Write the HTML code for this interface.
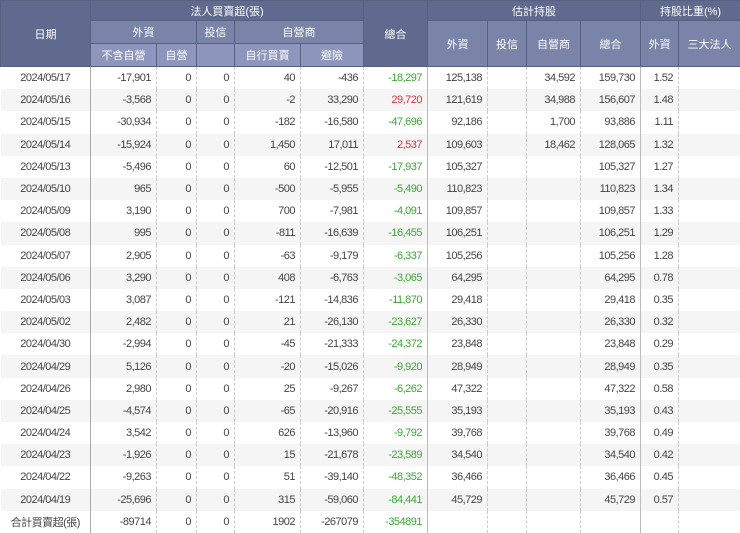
<!DOCTYPE html>
<html><head><meta charset="utf-8"><style>
body{margin:0;width:740px;height:528px;overflow:hidden;background:#fff;font-family:"Liberation Sans","Noto Sans CJK TC",sans-serif;font-size:11px;color:#444}
table{border-collapse:collapse;table-layout:fixed;width:740px}
th{color:#fff;font-weight:normal;text-align:center;padding:0;border:1px solid #56607f;font-size:11px}
th.a{background:#5f6a8e;height:19px}
th.b{background:#7a84a9;height:22px}
th.c{background:#8e96bd;height:22px}
td{height:22.2px;padding:0 5px 0 0;text-align:right;white-space:nowrap;border-left:1px dashed #ccc;letter-spacing:-0.5px}
td:first-child{text-align:center;padding:0;border-left:none;border-right:1px solid #aaa}
tr:nth-child(even) td{background:#f5f5f5}
.g{color:#3aa833}.r{color:#e0333a}
td.s{border-left:1px solid #bbb}
</style></head><body>
<table>
<colgroup><col style="width:90px"><col style="width:66px"><col style="width:40px"><col style="width:38px"><col style="width:66px"><col style="width:63px"><col style="width:64px"><col style="width:60px"><col style="width:39px"><col style="width:54px"><col style="width:60px"><col style="width:38px"><col style="width:62px"></colgroup>
<thead>
<tr><th class="a" rowspan="3">日期</th><th class="a" colspan="5">法人買賣超(張)</th><th class="a" rowspan="3">總合</th><th class="a" colspan="4">估計持股</th><th class="a" colspan="2">持股比重(%)</th></tr>
<tr><th class="b" colspan="2">外資</th><th class="b">投信</th><th class="b" colspan="2">自營商</th><th class="b" rowspan="2">外資</th><th class="b" rowspan="2">投信</th><th class="b" rowspan="2">自營商</th><th class="b" rowspan="2">總合</th><th class="b" rowspan="2">外資</th><th class="b" rowspan="2">三大法人</th></tr>
<tr><th class="c">不含自營</th><th class="c">自營</th><th class="c"></th><th class="c">自行買賣</th><th class="c">避險</th></tr>
</thead>
<tbody>
<tr><td>2024/05/17</td><td>-17,901</td><td>0</td><td>0</td><td>40</td><td>-436</td><td class="g">-18,297</td><td class="s">125,138</td><td></td><td>34,592</td><td>159,730</td><td class="s">1.52</td><td></td></tr>
<tr><td>2024/05/16</td><td>-3,568</td><td>0</td><td>0</td><td>-2</td><td>33,290</td><td class="r">29,720</td><td class="s">121,619</td><td></td><td>34,988</td><td>156,607</td><td class="s">1.48</td><td></td></tr>
<tr><td>2024/05/15</td><td>-30,934</td><td>0</td><td>0</td><td>-182</td><td>-16,580</td><td class="g">-47,696</td><td class="s">92,186</td><td></td><td>1,700</td><td>93,886</td><td class="s">1.11</td><td></td></tr>
<tr><td>2024/05/14</td><td>-15,924</td><td>0</td><td>0</td><td>1,450</td><td>17,011</td><td class="r">2,537</td><td class="s">109,603</td><td></td><td>18,462</td><td>128,065</td><td class="s">1.32</td><td></td></tr>
<tr><td>2024/05/13</td><td>-5,496</td><td>0</td><td>0</td><td>60</td><td>-12,501</td><td class="g">-17,937</td><td class="s">105,327</td><td></td><td></td><td>105,327</td><td class="s">1.27</td><td></td></tr>
<tr><td>2024/05/10</td><td>965</td><td>0</td><td>0</td><td>-500</td><td>-5,955</td><td class="g">-5,490</td><td class="s">110,823</td><td></td><td></td><td>110,823</td><td class="s">1.34</td><td></td></tr>
<tr><td>2024/05/09</td><td>3,190</td><td>0</td><td>0</td><td>700</td><td>-7,981</td><td class="g">-4,091</td><td class="s">109,857</td><td></td><td></td><td>109,857</td><td class="s">1.33</td><td></td></tr>
<tr><td>2024/05/08</td><td>995</td><td>0</td><td>0</td><td>-811</td><td>-16,639</td><td class="g">-16,455</td><td class="s">106,251</td><td></td><td></td><td>106,251</td><td class="s">1.29</td><td></td></tr>
<tr><td>2024/05/07</td><td>2,905</td><td>0</td><td>0</td><td>-63</td><td>-9,179</td><td class="g">-6,337</td><td class="s">105,256</td><td></td><td></td><td>105,256</td><td class="s">1.28</td><td></td></tr>
<tr><td>2024/05/06</td><td>3,290</td><td>0</td><td>0</td><td>408</td><td>-6,763</td><td class="g">-3,065</td><td class="s">64,295</td><td></td><td></td><td>64,295</td><td class="s">0.78</td><td></td></tr>
<tr><td>2024/05/03</td><td>3,087</td><td>0</td><td>0</td><td>-121</td><td>-14,836</td><td class="g">-11,870</td><td class="s">29,418</td><td></td><td></td><td>29,418</td><td class="s">0.35</td><td></td></tr>
<tr><td>2024/05/02</td><td>2,482</td><td>0</td><td>0</td><td>21</td><td>-26,130</td><td class="g">-23,627</td><td class="s">26,330</td><td></td><td></td><td>26,330</td><td class="s">0.32</td><td></td></tr>
<tr><td>2024/04/30</td><td>-2,994</td><td>0</td><td>0</td><td>-45</td><td>-21,333</td><td class="g">-24,372</td><td class="s">23,848</td><td></td><td></td><td>23,848</td><td class="s">0.29</td><td></td></tr>
<tr><td>2024/04/29</td><td>5,126</td><td>0</td><td>0</td><td>-20</td><td>-15,026</td><td class="g">-9,920</td><td class="s">28,949</td><td></td><td></td><td>28,949</td><td class="s">0.35</td><td></td></tr>
<tr><td>2024/04/26</td><td>2,980</td><td>0</td><td>0</td><td>25</td><td>-9,267</td><td class="g">-6,262</td><td class="s">47,322</td><td></td><td></td><td>47,322</td><td class="s">0.58</td><td></td></tr>
<tr><td>2024/04/25</td><td>-4,574</td><td>0</td><td>0</td><td>-65</td><td>-20,916</td><td class="g">-25,555</td><td class="s">35,193</td><td></td><td></td><td>35,193</td><td class="s">0.43</td><td></td></tr>
<tr><td>2024/04/24</td><td>3,542</td><td>0</td><td>0</td><td>626</td><td>-13,960</td><td class="g">-9,792</td><td class="s">39,768</td><td></td><td></td><td>39,768</td><td class="s">0.49</td><td></td></tr>
<tr><td>2024/04/23</td><td>-1,926</td><td>0</td><td>0</td><td>15</td><td>-21,678</td><td class="g">-23,589</td><td class="s">34,540</td><td></td><td></td><td>34,540</td><td class="s">0.42</td><td></td></tr>
<tr><td>2024/04/22</td><td>-9,263</td><td>0</td><td>0</td><td>51</td><td>-39,140</td><td class="g">-48,352</td><td class="s">36,466</td><td></td><td></td><td>36,466</td><td class="s">0.45</td><td></td></tr>
<tr><td>2024/04/19</td><td>-25,696</td><td>0</td><td>0</td><td>315</td><td>-59,060</td><td class="g">-84,441</td><td class="s">45,729</td><td></td><td></td><td>45,729</td><td class="s">0.57</td><td></td></tr>
<tr><td>合計買賣超(張)</td><td>-89714</td><td>0</td><td>0</td><td>1902</td><td>-267079</td><td class="g">-354891</td><td class="s"></td><td></td><td></td><td></td><td class="s"></td><td></td></tr>
</tbody></table>
</body></html>
